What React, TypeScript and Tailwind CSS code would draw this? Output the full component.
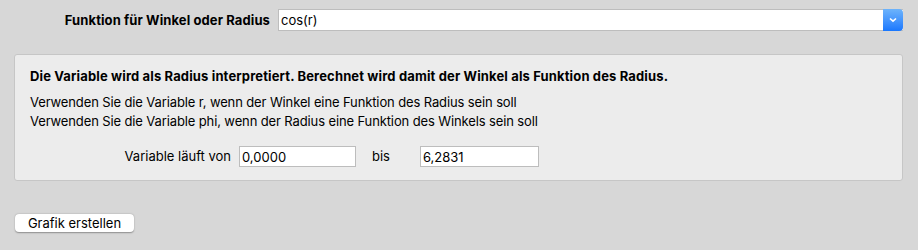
import React from "react";

export default function App() {
  const font = { fontFamily: "Inter, 'Liberation Sans', sans-serif" };
  return (
    <div
      className="w-[918px] h-[250px] bg-[#d7d7d7] text-[13px] text-black overflow-hidden"
      style={font}
    >
      <div className="flex items-center pt-[9px] h-[31px]">
        <div className="w-[270px] text-right font-bold leading-[22px] tracking-[0.1px]">Funktion für Winkel oder Radius</div>
        <div className="ml-[8px] w-[625px] h-[22px] flex bg-white border-y border-l border-[#bdbdbd]">
          <div className="flex-1 pl-[2px] leading-[20px]">cos(r)</div>
          <div className="w-[20px] h-[22px] -my-px rounded-r-[4px] bg-gradient-to-b from-[#6db3fb] to-[#1877fe] flex items-center justify-center">
            <svg width="10" height="6" viewBox="0 0 10 6">
              <path d="M2 1.5 L5 4.2 L8 1.5" fill="none" stroke="white" strokeWidth="1.6" />
            </svg>
          </div>
        </div>
      </div>

      <div className="ml-[14px] mt-[23px] w-[889px] h-[127px] bg-[#ececec] border border-[#c6c6c6] rounded-[3px] pl-[15px] pt-[12px]">
        <div className="font-bold leading-[18px] tracking-[0.14px]">
          Die Variable wird als Radius interpretiert. Berechnet wird damit der Winkel als Funktion des Radius.
        </div>
        <div className="mt-[8px] leading-[19px] tracking-[-0.12px]">
          <div>Verwenden Sie die Variable r, wenn der Winkel eine Funktion des Radius sein soll</div>
          <div>Verwenden Sie die Variable phi, wenn der Radius eine Funktion des Winkels sein soll</div>
        </div>
        <div className="flex items-center mt-[15px] h-[21px]">
          <div className="w-[201px] text-right">Variable läuft von</div>
          <div className="ml-[8px] w-[117px] h-[21px] bg-white border border-[#bdbdbd] pl-[2px] leading-[20px]">0,0000</div>
          <div className="ml-[16px] w-[48px]">bis</div>
          <div className="w-[119px] h-[21px] bg-white border border-[#bdbdbd] pl-[2px] leading-[20px]">6,2831</div>
        </div>
      </div>

      <div className="ml-[15px] mt-[33px] w-[119px] h-[18px] bg-white rounded-[4px] shadow-[0_0.5px_1.5px_rgba(0,0,0,0.35)] text-center leading-[18px]">
        Grafik erstellen
      </div>
    </div>
  );
}
